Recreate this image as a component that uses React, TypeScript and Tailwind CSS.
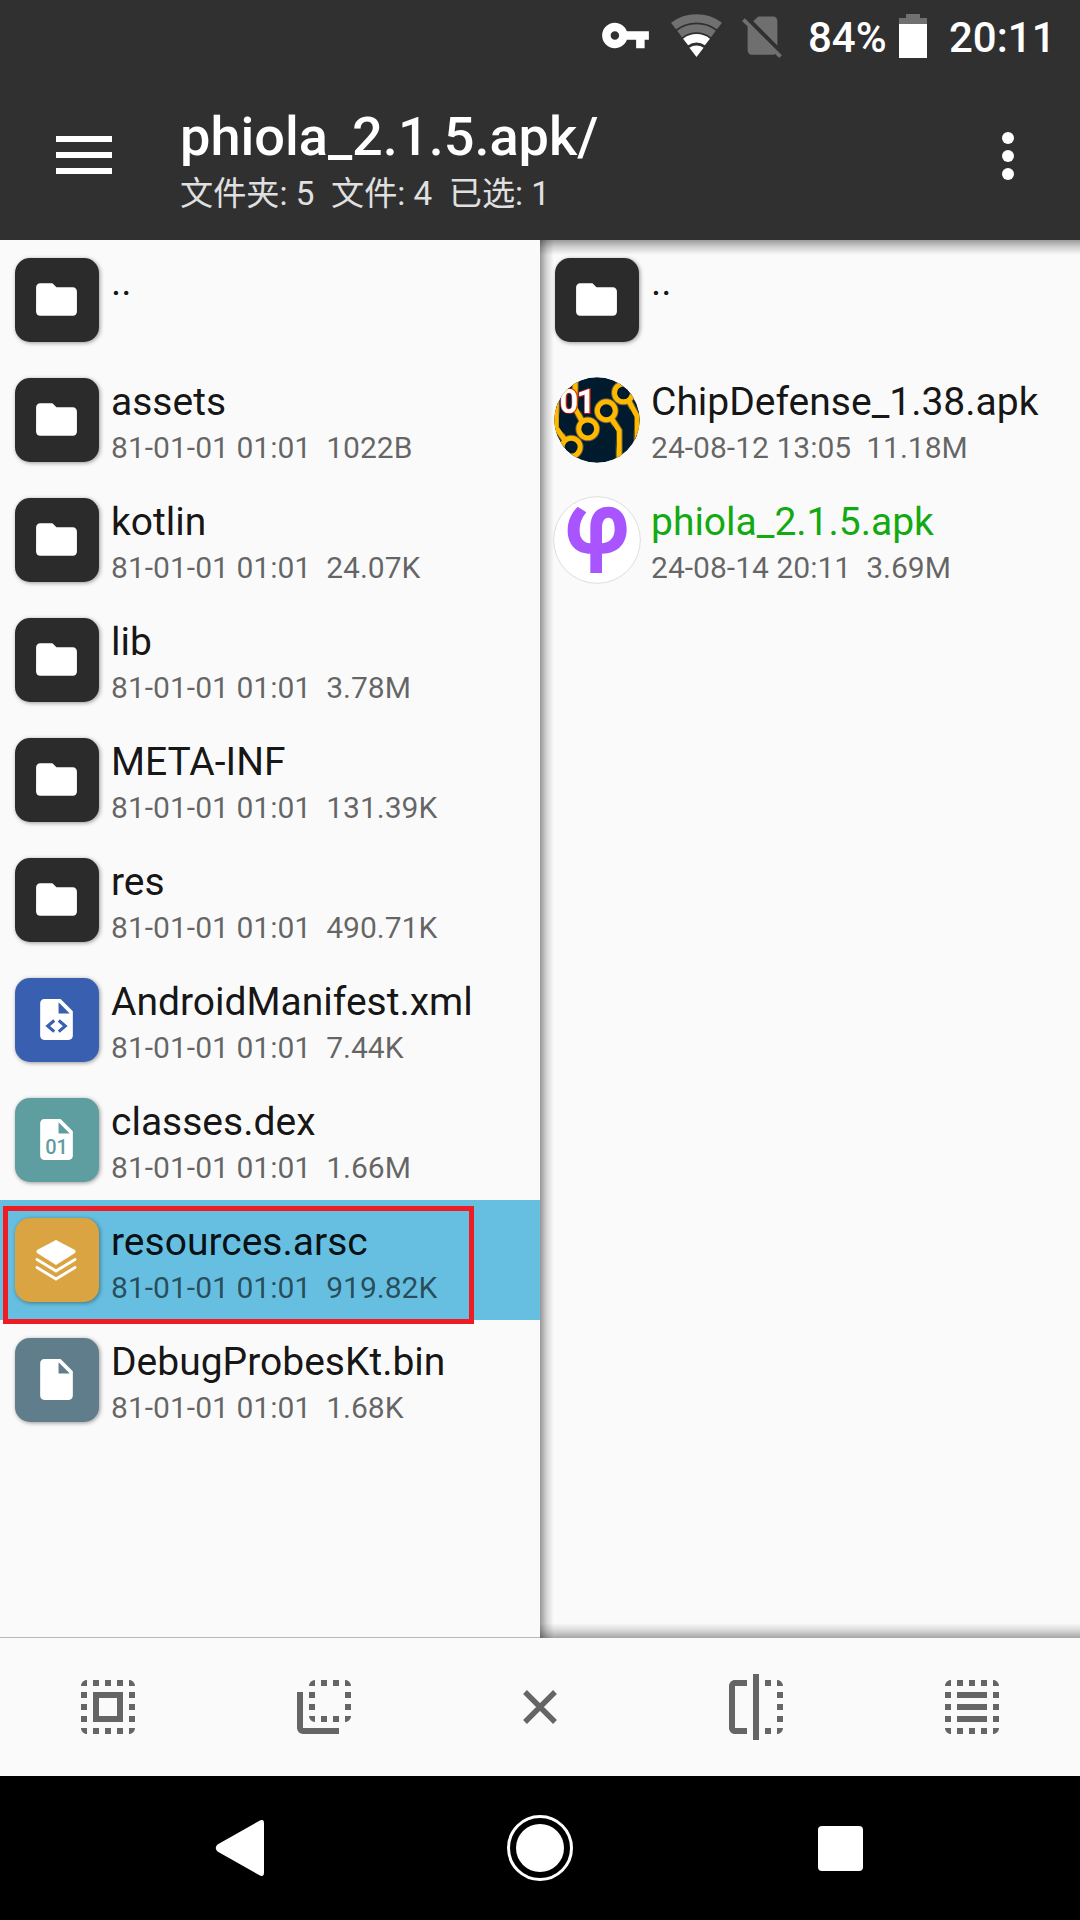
import type { ReactNode } from 'react';
import { MdFlip, MdFlipToBack, MdFolder, MdSelectAll } from 'react-icons/md';

type Kind = 'folder' | 'xml' | 'dex' | 'arsc' | 'file' | 'chip' | 'phiola';

interface Entry {
  name: string;
  date?: string;
  size?: string;
  kind: Kind;
  selected?: boolean;
  current?: boolean;
}

const ARCHIVE_DATE = '81-01-01 01:01';

const left: Entry[] = [
  { name: '..', kind: 'folder' },
  { name: 'assets', date: ARCHIVE_DATE, size: '1022B', kind: 'folder' },
  { name: 'kotlin', date: ARCHIVE_DATE, size: '24.07K', kind: 'folder' },
  { name: 'lib', date: ARCHIVE_DATE, size: '3.78M', kind: 'folder' },
  { name: 'META-INF', date: ARCHIVE_DATE, size: '131.39K', kind: 'folder' },
  { name: 'res', date: ARCHIVE_DATE, size: '490.71K', kind: 'folder' },
  { name: 'AndroidManifest.xml', date: ARCHIVE_DATE, size: '7.44K', kind: 'xml' },
  { name: 'classes.dex', date: ARCHIVE_DATE, size: '1.66M', kind: 'dex' },
  { name: 'resources.arsc', date: ARCHIVE_DATE, size: '919.82K', kind: 'arsc', selected: true },
  { name: 'DebugProbesKt.bin', date: ARCHIVE_DATE, size: '1.68K', kind: 'file' },
];

const right: Entry[] = [
  { name: '..', kind: 'folder' },
  { name: 'ChipDefense_1.38.apk', date: '24-08-12 13:05', size: '11.18M', kind: 'chip' },
  { name: 'phiola_2.1.5.apk', date: '24-08-14 20:11', size: '3.69M', kind: 'phiola', current: true },
];

function Tile({ color, children }: { color: string; children: ReactNode }) {
  return (
    <div
      className={`flex h-[84px] w-[84px] items-center justify-center rounded-[15px] pb-px pr-px text-white shadow-[1px_1px_4px_rgba(0,0,0,0.4)] ${color}`}
    >
      {children}
    </div>
  );
}

function Document({ children }: { children?: ReactNode }) {
  return (
    <svg viewBox="0 0 24 24" className="size-[49px]" fill="currentColor">
      <path
        fillRule="evenodd"
        d="M6 2c-1.1 0-1.99.9-1.99 2L4 20c0 1.1.89 2 1.99 2H18c1.1 0 2-.9 2-2V8l-6-6H6zm7 7V3.5L18.5 9H13z"
      />
      {children}
    </svg>
  );
}

function ChipLogo() {
  return (
    <svg viewBox="26 26 260 260" className="size-[86px]">
      <defs>
        <clipPath id="chip-disc">
          <circle cx="156" cy="156" r="129" />
        </clipPath>
        <g id="chip-traces">
          <path d="M90 20V120L110 158M33 90V180L60 218M200 152L223 188V290M252 98L277 145V260" />
          <circle cx="128" cy="183" r="27" />
          <circle cx="184" cy="128" r="27" />
          <circle cx="236" cy="74" r="27" />
          <circle cx="78" cy="238" r="27" />
        </g>
      </defs>
      <g clipPath="url(#chip-disc)" fill="#001b2e">
        <circle cx="156" cy="156" r="130" />
        <use href="#chip-traces" stroke="#6b5a3c" strokeWidth="21" />
        <use href="#chip-traces" stroke="#ffba00" strokeWidth="15" />
        <text
          x="43"
          y="134"
          fontFamily="Roboto"
          fontWeight="700"
          fontSize="99"
          textLength="108"
          fill="#fff"
          stroke="#c01808"
          strokeWidth="6"
          paintOrder="stroke"
        >
          01
        </text>
      </g>
    </svg>
  );
}

function PhiolaLogo() {
  return (
    <svg viewBox="24 384 264 264" className="size-[88px]">
      <circle cx="156" cy="516" r="130" fill="#fff" stroke="#dedede" strokeWidth="3" />
      <path
        fill="#a855ff"
        fillRule="evenodd"
        d="M98 416L124 433C110 450 103 468 104 488C104 510 115 524 136 526V478C136 440 156 416 190 416C226 416 245 446 245 484C245 530 215 557 171 557V615H136V557C95 557 68 530 68 488C68 460 78 436 98 416ZM171 526C195 524 209 508 209 484C209 460 202 449 190 449C178 449 171 460 171 480Z"
      />
    </svg>
  );
}

function EntryIcon({ kind }: { kind: Kind }) {
  switch (kind) {
    case 'folder':
      return (
        <Tile color="bg-[#2b2b2b]">
          <MdFolder className="size-[49px]" />
        </Tile>
      );
    case 'xml':
      return (
        <Tile color="bg-[#3960b0]">
          <Document>
            <path d="M10.9 12.5L7.7 15.2l3.2 2.7M13.1 12.5l3.2 2.7-3.2 2.7" fill="none" stroke="#3960b0" strokeWidth="1.5" />
          </Document>
        </Tile>
      );
    case 'dex':
      return (
        <Tile color="bg-[#5f9ea0]">
          <Document>
            <text x="12" y="18.9" textAnchor="middle" fontFamily="Roboto" fontWeight="500" fontSize="9.8" fill="#5f9ea0">
              01
            </text>
          </Document>
        </Tile>
      );
    case 'arsc':
      return (
        <Tile color="bg-[#d9a441]">
          <svg viewBox="0 0 42 42" className="mr-px size-[42px]">
            <path d="M21 1.5L40 11.5V13.5L21 25.5L2 13.5V11.5Z" fill="#fff" stroke="#fff" strokeLinejoin="round" />
            <path d="M2 20.5L21 32L40 20.5M2 28.5L21 40L40 28.5" fill="none" stroke="#fff" strokeWidth="2.8" strokeLinecap="round" />
          </svg>
        </Tile>
      );
    case 'file':
      return (
        <Tile color="bg-[#607d8b]">
          <Document />
        </Tile>
      );
    case 'chip':
      return <ChipLogo />;
    case 'phiola':
      return <PhiolaLogo />;
  }
}

function Row({ entry }: { entry: Entry }) {
  return (
    <div className={`relative flex h-[120px] ${entry.selected ? 'bg-[#66bfe0]' : ''}`}>
      <div className="mr-[-3px] flex w-[114px] shrink-0 items-center justify-center">
        <EntryIcon kind={entry.kind} />
      </div>
      <div className="whitespace-pre pt-[19px]">
        <div className={`text-[39px] leading-[46px] ${entry.current ? 'text-[#12a912]' : 'text-black/93'}`}>{entry.name}</div>
        {entry.date && (
          <div className="mt-[5px] text-[30.05px] leading-[36px] text-black/60">
            {entry.date}
            {'  '}
            {entry.size}
          </div>
        )}
      </div>
      {entry.selected && <div className="absolute left-[3px] top-[6px] h-[118px] w-[471px] border-[5px] border-[#ee1c24]" />}
    </div>
  );
}

function StatusBar() {
  return (
    <div className="flex h-[72px] items-start text-[42px] font-medium leading-[72px] text-white">
      <svg viewBox="0 0 24 24" className="ml-[600px] mt-[10px] size-[51px]" fill="currentColor">
        <path d="M12.65 10C11.83 7.67 9.61 6 7 6c-3.31 0-6 2.69-6 6s2.69 6 6 6c2.61 0 4.83-1.67 5.65-4H17v4h4v-4h2v-4H12.65zM7 14c-1.1 0-2-.9-2-2s.9-2 2-2 2 .9 2 2-.9 2-2 2z" />
      </svg>
      <svg viewBox="0 0 52 44" className="ml-[20px] mt-[14px] h-[44px] w-[52px]" fill="none">
        <path d="M2.5 12A38.3 38.3 0 0 1 48.5 12" stroke="#707070" strokeWidth="8.2" />
        <path d="M8.6 20A28.2 28.2 0 0 1 42.4 20" stroke="#707070" strokeWidth="8" />
        <path d="M14.6 28A18 18 0 0 1 36.4 28" stroke="#fff" strokeWidth="8.4" />
        <path d="M25.5 43L18.4 33.8A11.7 11.7 0 0 1 32.6 33.8Z" fill="#fff" />
      </svg>
      <svg viewBox="0 0 24 24" className="ml-[14px] mt-[10px] size-[51px]" fill="#6f6f6f">
        <path d="M18.99 5c0-1.1-.89-2-1.99-2h-7L7.66 5.34 19 16.68 18.99 5zM3.65 3.88L2.38 5.15 5 7.77V19c0 1.1.9 2 2 2h10.01c.35 0 .67-.1.96-.26l1.88 1.88 1.27-1.27L3.65 3.88z" />
      </svg>
      <span className="ml-[20px] mt-[2px] w-[80px]">84%</span>
      <svg viewBox="0 0 28 44" className="ml-[11px] mt-[14px] h-[44px] w-[28px]">
        <path d="M7 0H21V4H28V10H0V4H7Z" fill="#707070" />
        <path d="M0 10H28V44H0Z" fill="#fff" />
      </svg>
      <span className="ml-[22px] mt-[2px]">20:11</span>
    </div>
  );
}

function Header() {
  return (
    <header className="h-[240px] shrink-0 bg-[#303030]">
      <StatusBar />
      <div className="flex h-[168px] text-white">
        <div className="ml-[56px] mt-[64px] flex w-[56px] flex-col gap-[10px]">
          <div className="h-[6px] bg-white" />
          <div className="h-[6px] bg-white" />
          <div className="h-[6px] bg-white" />
        </div>
        <div className="ml-[68px] mt-[33px] grow whitespace-pre">
          <div className="text-[54.1px] font-medium leading-[64px]">phiola_2.1.5.apk/</div>
          <div className="mt-[5px] text-[33.2px] leading-[40px] text-[#e0e0e0]">文件夹: 5  文件: 4  已选: 1</div>
        </div>
        <div className="mr-[66px] mt-[60px] flex flex-col gap-[6px]">
          <div className="size-[12px] rounded-full bg-white" />
          <div className="size-[12px] rounded-full bg-white" />
          <div className="size-[12px] rounded-full bg-white" />
        </div>
      </div>
    </header>
  );
}

function SelectLines() {
  return (
    <svg viewBox="0 0 24 24" className="size-[72px]" fill="currentColor">
      <path d="M3 5h2V3c-1.1 0-2 .9-2 2zM19 3v2h2c0-1.1-.9-2-2-2zM3 19c0 1.1.9 2 2 2v-2H3zM19 21c1.1 0 2-.9 2-2h-2v2z" />
      <path d="M7 3h2v2H7zM11 3h2v2h-2zM15 3h2v2h-2zM7 19h2v2H7zM11 19h2v2h-2zM15 19h2v2h-2zM3 7h2v2H3zM3 11h2v2H3zM3 15h2v2H3zM19 7h2v2h-2zM19 11h2v2h-2zM19 15h2v2h-2z" />
      <path d="M7 7h10v2H7zM7 11h10v2H7zM7 15h10v2H7z" />
    </svg>
  );
}

export default function App() {
  return (
    <div className="flex h-[1920px] w-[1080px] flex-col overflow-hidden bg-[#fafafa] font-['Roboto','Noto_Sans_CJK_SC',sans-serif]">
      <Header />
      <main className="grid h-[1398px] shrink-0 grid-cols-2">
        <section className="border-b border-[#b8b8b8]">
          {left.map((e) => (
            <Row key={e.name} entry={e} />
          ))}
        </section>
        <section className="relative">
          {right.map((e) => (
            <Row key={e.name} entry={e} />
          ))}
          <div className="absolute inset-x-0 top-0 h-[15px] bg-linear-to-b from-black/38 via-black/16 to-transparent" />
          <div className="absolute inset-x-0 bottom-0 h-[15px] bg-linear-to-t from-black/34 via-black/14 to-transparent" />
          <div className="absolute inset-y-0 left-0 w-[14px] bg-linear-to-r from-black/40 via-black/14 to-transparent" />
        </section>
      </main>
      <div className="grid h-[138px] shrink-0 grid-cols-5 place-items-center text-[#656565]">
        <MdSelectAll className="size-[72px]" />
        <MdFlipToBack className="size-[72px]" />
        <svg viewBox="0 0 34 34" className="size-[34px]" fill="none" stroke="currentColor" strokeWidth="5.4">
          <path d="M2 2L32 32M32 2L2 32" />
        </svg>
        <MdFlip className="size-[72px]" />
        <SelectLines />
      </div>
      <nav className="flex h-[144px] shrink-0 items-center bg-black">
        <svg viewBox="0 0 49 56" className="ml-[215px] h-[56px] w-[49px]" fill="#fff">
          <path d="M44.5 .7Q49 -1.5 49 3V53Q49 57.5 44.5 55.3L2.5 31.5Q-1 28 2.5 24.5Z" />
        </svg>
        <div className="ml-[243px] flex size-[66px] items-center justify-center rounded-full border-[3px] border-white">
          <div className="size-[48px] rounded-full bg-white" />
        </div>
        <div className="ml-[244.500px] size-[45px] rounded-[4px] bg-white" />
      </nav>
    </div>
  );
}
